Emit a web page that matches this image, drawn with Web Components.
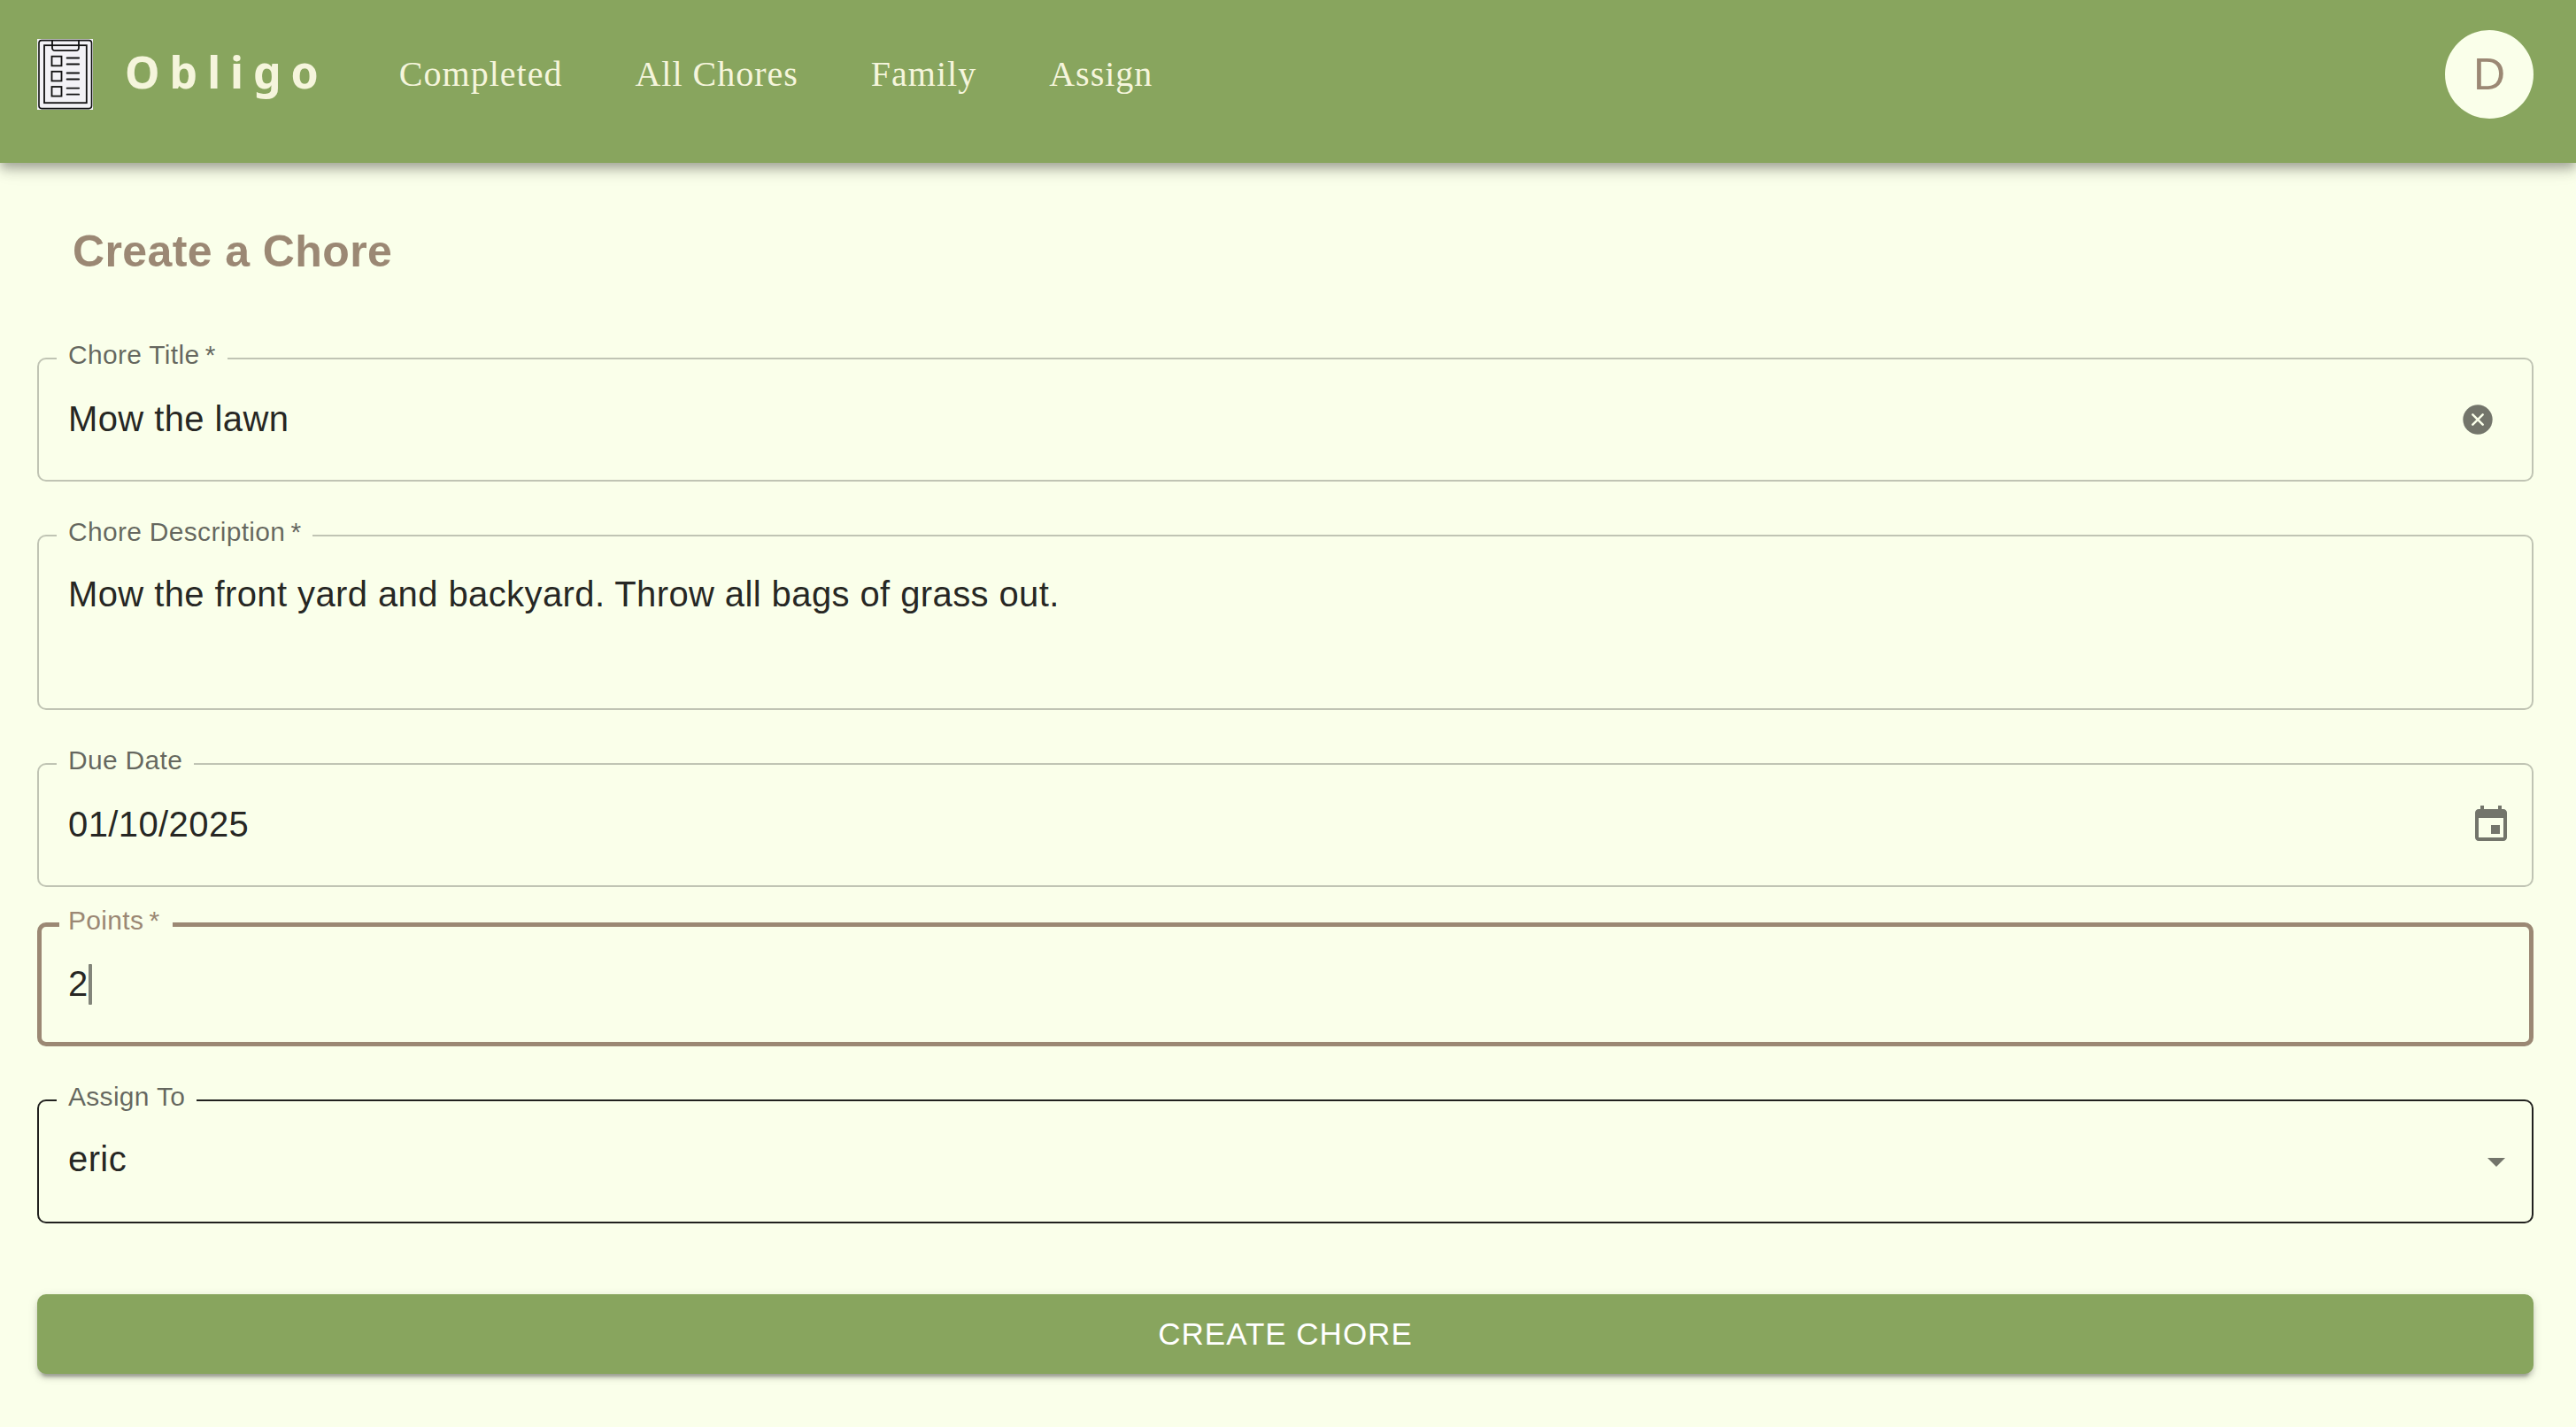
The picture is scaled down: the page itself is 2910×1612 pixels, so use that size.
<!DOCTYPE html>
<html lang="en">
<head>
<meta charset="utf-8">
<meta name="viewport" content="width=device-width, initial-scale=1">
<title>Obligo</title>
<style>
  :root {
    --green: #88a55e;
    --cream: #faffea;
    --beige: #f5f5dc;
    --brown: #9b8874;
    --ink: rgba(0, 0, 0, .87);
    --ink-soft: rgba(0, 0, 0, .6);
    --icon: rgba(0, 0, 0, .54);
    --line: rgba(0, 0, 0, .23);
    --sans: "Liberation Sans", Arial, sans-serif;
  }
  body {
    margin: 0;
    background: var(--cream);
    color: var(--ink);
    font: 40px/58px var(--sans);
    letter-spacing: .01em;
  }
</style>
</head>
<body>
<chore-app></chore-app>

<template id="t-logo">
  <style>
    :host { display: block; }
    svg { display: block; width: 63px; height: 80px; }
  </style>
  <svg viewBox="0 0 63 80" fill="none" stroke="#111" stroke-width="1.8" role="img" aria-label="Clipboard">
    <rect width="63" height="80" fill="#f3f2f6" stroke="none"/>
    <rect x="2" y="1.6" width="59.5" height="77" rx="3" stroke-width="1.6"/>
    <rect x="8" y="7.2" width="47.8" height="65" stroke-width="1.8"/>
    <path d="M17 2v8.2a3 3 0 0 0 3 3h24a3 3 0 0 0 3-3V2"/>
    <rect x="16.5" y="19.7" width="11" height="10.6"/>
    <rect x="16.5" y="36.8" width="11" height="10.6"/>
    <rect x="16.5" y="54" width="11" height="10.6"/>
    <path stroke-linecap="round" d="M33.6 21.5h13.6M33.6 28.5h13.6M33.6 38.5h13.6M33.6 45.5h13.6M33.6 55.6h13.6M33.6 62.7h13.6"/>
  </svg>
</template>

<template id="t-bar">
  <style>
    :host { display: block; }
    header {
      display: flex; align-items: center;
      padding: 34px 48px 50px 42px;
      background: var(--green);
      box-shadow: 0 5px 10px -2px rgba(0,0,0,.2), 0 10px 12px rgba(0,0,0,.14), 0 2px 25px rgba(0,0,0,.12);
    }
    .brand {
      display: flex; align-items: center; gap: 36px;
      color: var(--beige); text-decoration: none;
      font: 700 50px/60px "Noto Sans", Tahoma, sans-serif;
      letter-spacing: 11px;
    }
    .brand span { padding-bottom: 6px; }
    nav { display: flex; gap: 82px; margin-left: 80px; flex: 1; }
    .avatar {
      width: 100px; height: 100px; padding: 0; border: 0; border-radius: 50%;
      background: var(--cream); color: var(--brown);
      font: 50px/50px var(--sans);
    }
  </style>
  <header>
    <a class="brand" href="#"><app-logo></app-logo><span>Obligo</span></a>
    <nav><slot></slot></nav>
    <button class="avatar" type="button" aria-label="Account of D">D</button>
  </header>
</template>

<template id="t-link">
  <style>
    :host { display: block; }
    a {
      color: var(--beige); text-decoration: none;
      font: 40px/60px "Liberation Serif", "Times New Roman", serif;
      letter-spacing: 1px;
    }
  </style>
  <a href="#"><slot></slot></a>
</template>

<template id="t-field">
  <style>
    :host { display: flow-root; --border: 2px; --rise: 18px; --label-h: 38px; --row: 118px; --below: 18px; --tone: var(--line); }
    :host([active]) { --border: 5px; --rise: 17px; --label-h: 39px; --row: 113px; --below: 17px; --tone: var(--brown); }
    :host([hovered]) { --tone: var(--ink); }
    :host([multiline]) { --row: 176px; }
    fieldset {
      min-width: 0; margin: calc(-1 * var(--rise)) 0 0; padding: 0;
      border: var(--border) solid var(--tone); border-radius: 10px;
    }
    legend {
      box-sizing: border-box; height: var(--label-h);
      margin-left: 20px; padding: 0 13px;
      color: var(--ink-soft); font-size: 30px; line-height: 30px; letter-spacing: .01em;
    }
    :host([active]) legend { padding: 0 15px 0 10px; color: var(--brown); }
    .row {
      display: flex; align-items: center; box-sizing: border-box;
      height: var(--row); padding: 0 var(--end, 33px) var(--below) 33px;
    }
    :host([active]) .row { padding-left: 30px; }
    input, textarea, select {
      flex: 1; min-width: 0; box-sizing: border-box; margin: 0; padding: 0;
      border: 0; outline: 0; background: none; color: inherit;
      font: inherit; letter-spacing: inherit;
    }
    input { height: 60px; padding-bottom: 2px; }
    :host([active]) input { flex: none; field-sizing: content; }
    .caret { width: 4px; height: 46px; border-radius: 1px; background: var(--ink-soft); opacity: .8; }
    select { appearance: none; height: 100px; padding-bottom: 6px; }
    textarea { display: block; height: 156px; padding-top: 18px; resize: none; align-self: flex-start; }
  </style>
  <fieldset>
    <legend><label for="control"></label></legend>
    <div class="row"><slot name="end"></slot></div>
  </fieldset>
</template>

<template id="t-icon">
  <style>
    :host { display: block; flex: none; }
    button { display: block; margin: 0; padding: 0; border: 0; background: none; }
    svg { display: block; width: var(--size, 48px); height: var(--size, 48px); fill: var(--icon); }
  </style>
</template>

<template id="t-submit">
  <style>
    :host { display: block; }
    button {
      display: block; width: 100%; height: 90px; padding: 0; border: 0; border-radius: 10px;
      background: var(--green); color: #fff;
      font: 35px/60px var(--sans); letter-spacing: 1px; text-transform: uppercase;
      box-shadow: 0 8px 3px -5px rgba(0,0,0,.2), 0 5px 5px rgba(0,0,0,.14), 0 3px 12px rgba(0,0,0,.12);
    }
  </style>
  <button type="submit"><slot></slot></button>
</template>

<template id="t-app">
  <style>
    :host { display: block; }
    main { padding: 60px 48px 60px 42px; }
    h1 { margin: 0 40px 80px; color: var(--brown); font-size: 50px; line-height: 80px; }
    form { display: flex; flex-direction: column; gap: 60px; }
    .pair { display: flex; flex-direction: column; gap: 40px; }
    chore-submit { margin-top: 20px; }
    .title { --end: 41px; }
    .date { --end: 22px; }
    .assign { --end: 16px; }
    .small { --size: 40px; }
  </style>
  <app-bar>
    <nav-link>Completed</nav-link>
    <nav-link>All Chores</nav-link>
    <nav-link>Family</nav-link>
    <nav-link>Assign</nav-link>
  </app-bar>
  <main>
    <h1>Create a Chore</h1>
    <form>
      <chore-field class="title" label="Chore Title" required value="Mow the lawn">
        <field-icon class="small" slot="end" name="clear" label="Clear title"></field-icon>
      </chore-field>
      <chore-field label="Chore Description" required multiline
        value="Mow the front yard and backyard. Throw all bags of grass out."></chore-field>
      <div class="pair">
        <chore-field class="date" label="Due Date" value="01/10/2025">
          <field-icon slot="end" name="calendar" label="Choose date"></field-icon>
        </chore-field>
        <chore-field label="Points" required active value="2"></chore-field>
      </div>
      <chore-field class="assign" label="Assign To" hovered options="eric">
        <field-icon slot="end" name="arrow"></field-icon>
      </chore-field>
      <chore-submit>Create Chore</chore-submit>
    </form>
  </main>
</template>

<script>
  class Base extends HTMLElement {
    constructor() {
      super();
      const source = document.getElementById(this.constructor.template);
      this.attachShadow({ mode: 'open' }).append(source.content.cloneNode(true));
    }
  }

  class AppLogo extends Base { static template = 't-logo'; }
  class AppBar extends Base { static template = 't-bar'; }
  class NavLink extends Base { static template = 't-link'; }
  class ChoreSubmit extends Base { static template = 't-submit'; }
  class ChoreApp extends Base { static template = 't-app'; }

  class ChoreField extends Base {
    static template = 't-field';
    connectedCallback() {
      const root = this.shadowRoot;
      if (root.getElementById('control')) return;
      const required = this.hasAttribute('required');
      root.querySelector('label').textContent =
        this.getAttribute('label') + (required ? '\u2009*' : '');

      const options = this.getAttribute('options');
      const tag = options ? 'select' : this.hasAttribute('multiline') ? 'textarea' : 'input';
      const control = document.createElement(tag);
      control.id = 'control';
      control.required = required;
      if (options) {
        for (const name of options.split(',')) control.add(new Option(name, name));
      } else {
        control.value = this.getAttribute('value') || '';
      }
      const row = root.querySelector('.row');
      row.prepend(control);
      if (this.hasAttribute('active')) {
        control.inputMode = 'numeric';
        const caret = document.createElement('span');
        caret.className = 'caret';
        control.after(caret);
      }
    }
  }

  const icons = {
    clear: '<path d="M12 2a10 10 0 1 0 0 20a10 10 0 1 0 0-20z"/><path d="M8.6 8.6l6.8 6.8M15.4 8.6l-6.8 6.8" stroke="#faffea" stroke-width="1.5" stroke-linecap="round"/>',
    calendar: '<path d="M17 12h-5v5h5v-5zM16 1v2H8V1H6v2H5c-1.11 0-1.99.9-1.99 2L3 19c0 1.1.89 2 2 2h14c1.1 0 2-.9 2-2V5c0-1.1-.9-2-2-2h-1V1h-2zm3 18H5V8h14v11z"/>',
    arrow: '<path d="M7 10l5 5 5-5z"/>'
  };

  class FieldIcon extends Base {
    static template = 't-icon';
    connectedCallback() {
      if (this.shadowRoot.querySelector('svg')) return;
      const label = this.getAttribute('label');
      const svg = `<svg viewBox="0 0 24 24" aria-hidden="true">${icons[this.getAttribute('name')]}</svg>`;
      const holder = document.createElement(label ? 'button' : 'span');
      if (label) {
        holder.type = 'button';
        holder.setAttribute('aria-label', label);
      }
      holder.innerHTML = svg;
      this.shadowRoot.append(holder);
    }
  }

  customElements.define('app-logo', AppLogo);
  customElements.define('nav-link', NavLink);
  customElements.define('app-bar', AppBar);
  customElements.define('field-icon', FieldIcon);
  customElements.define('chore-field', ChoreField);
  customElements.define('chore-submit', ChoreSubmit);
  customElements.define('chore-app', ChoreApp);
</script>
</body>
</html>
